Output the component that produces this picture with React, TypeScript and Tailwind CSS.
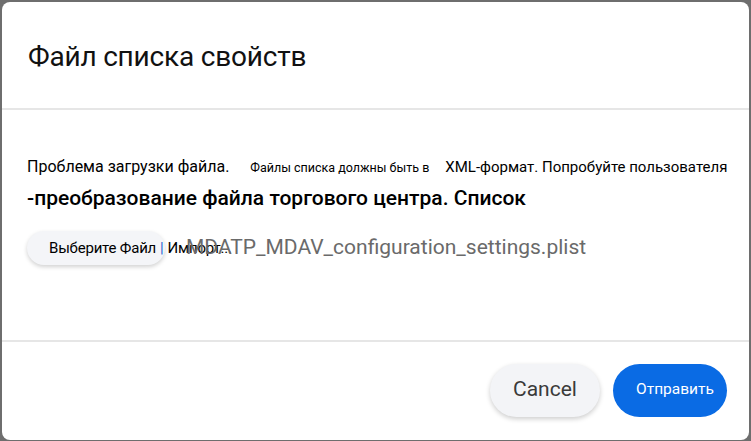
import React from 'react';

export default function App() {
  return (
    <div className="h-screen w-full overflow-hidden bg-[#6e6e6e] pl-[2px] pt-[2px]">
      <div className="flex h-[438px] w-[747px] flex-col rounded-lg bg-white font-['Roboto',sans-serif] text-black">
        <header className="flex h-[108px] items-center border-b-2 border-[#e6e6e6] px-[26px] pt-[4px]">
          <h1 className="text-[28px] font-normal tracking-[-0.2px] text-[#111]">Файл списка свойств</h1>
        </header>

        <section className="flex-1 px-[25px] pt-[47px]">
          <p className="flex items-baseline whitespace-nowrap leading-[20px]">
            <span className="text-[16px]">Проблема загрузки файла.</span>
            <span className="ml-[21px] text-[12.5px]">Файлы списка должны быть в</span>
            <span className="ml-[16px] text-[15px]">XML-формат. Попробуйте пользователя</span>
          </p>
          <p className="mt-[7px] whitespace-nowrap text-[21px] font-medium leading-[26px]">
            -преобразование файла торгового центра. Список
          </p>

          <div className="mt-[20px] flex items-center">
            <button
              type="button"
              className="flex h-[34px] w-[138px] shrink-0 items-center overflow-visible whitespace-nowrap rounded-full bg-[#f4f5f8] pl-[22px] text-[15px] tracking-[-0.2px] text-black shadow-[0_2px_4px_rgba(0,0,0,0.18)]"
            >
              Выберите Файл <span className="mx-[4px] text-[#1a5fd0]">|</span> Импорт...
            </button>
            <span className="ml-[21px] whitespace-nowrap text-[21px] text-[#6a6a6a]">
              MDATP_MDAV_configuration_settings.plist
            </span>
          </div>
        </section>

        <footer className="flex h-[100px] items-center justify-end gap-[13px] border-t-2 border-[#e6e6e6] pb-[2px] pr-[22px]">
          <button
            type="button"
            className="h-[53px] w-[110px] rounded-full bg-[#f3f4f7] text-[21px] text-[#3a3a3a] shadow-[0_2px_5px_rgba(0,0,0,0.2)]"
          >
            Cancel
          </button>
          <button
            type="button"
            className="h-[53px] w-[114px] rounded-full bg-[#0a6be4] pl-[10px] text-[15.5px] text-white"
          >
            Отправить
          </button>
        </footer>
      </div>
    </div>
  );
}
